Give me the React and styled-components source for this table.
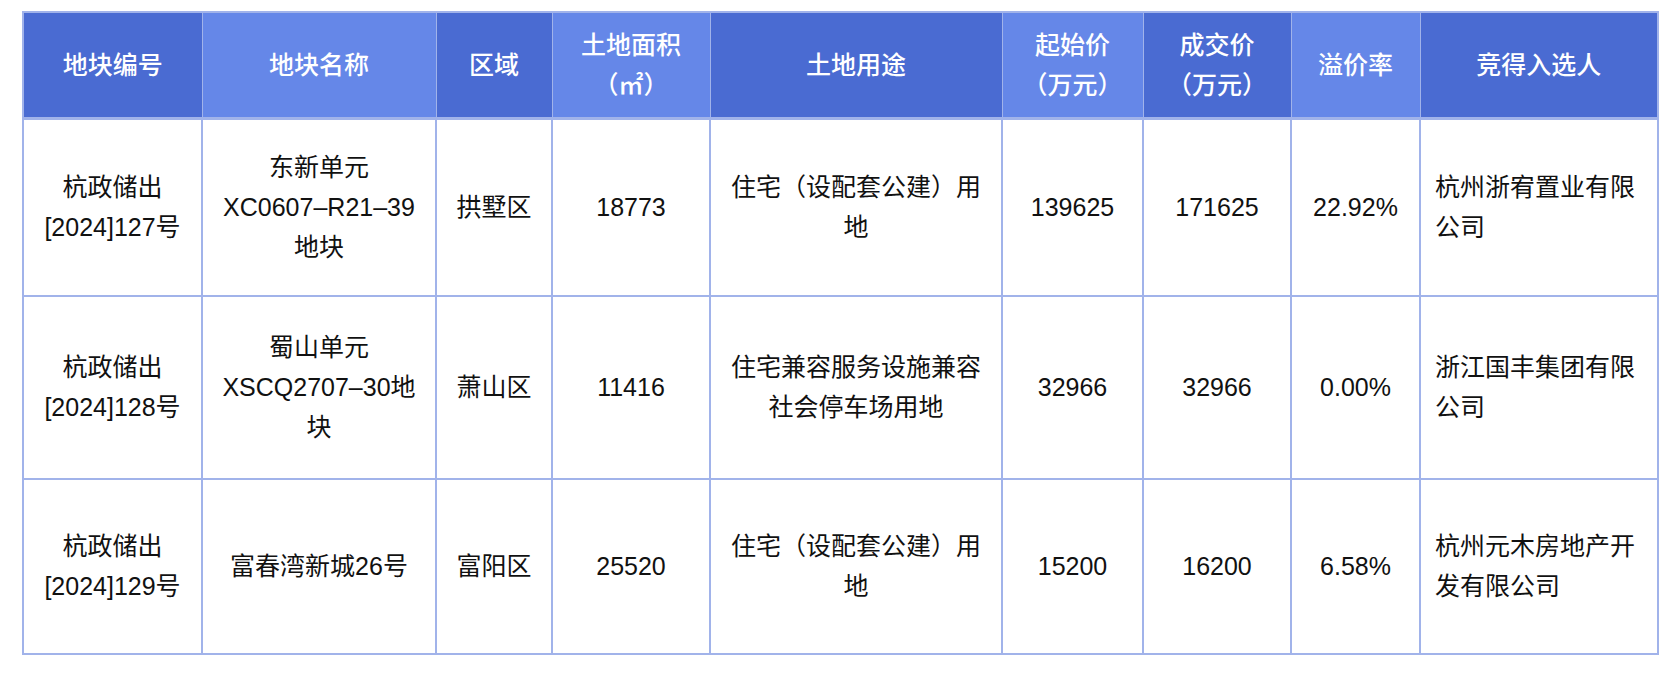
import React from 'react'
import styled, { createGlobalStyle } from 'styled-components'

const GlobalStyle = createGlobalStyle`
  body {
    margin: 0;
    background: #ffffff;
    font-family: "Liberation Sans", "Noto Sans CJK SC", sans-serif;
  }
`

const Page = styled.div`
  padding: 11px 20px 0 22px;
`

const Table = styled.table`
  border-collapse: collapse;
  table-layout: fixed;
  width: 1637px;
  border: 2px solid #a1b3ea;
`

const HeadCell = styled.th`
  height: 104px;
  padding: 0 8px;
  background: ${(p) => (p.$light ? '#6587e8' : '#4a6bd2')};
  color: #ffffff;
  font-size: 25px;
  font-weight: 500;
  line-height: 40px;
  text-align: center;
  border: 1px solid #a1b3ea;
  border-bottom: 3px solid #a1b3ea;
`

const Row = styled.tr`
  height: ${(p) => p.$height}px;
`

const Cell = styled.td`
  padding: 0 14px;
  font-size: 25px;
  line-height: 40px;
  color: #111111;
  text-align: ${(p) => (p.$left ? 'left' : 'center')};
  vertical-align: middle;
  border: 2px solid #a1b3ea;
`

const widths = [179, 234, 116, 158, 292, 141, 148, 129, 238]
const rowHeights = [177, 183, 175]

const headers = [
  ['地块编号'],
  ['地块名称'],
  ['区域'],
  ['土地面积', '（㎡）'],
  ['土地用途'],
  ['起始价', '（万元）'],
  ['成交价', '（万元）'],
  ['溢价率'],
  ['竞得入选人'],
]

const rows = [
  [
    ['杭政储出', '[2024]127号'],
    ['东新单元', 'XC0607–R21–39', '地块'],
    ['拱墅区'],
    ['18773'],
    ['住宅（设配套公建）用', '地'],
    ['139625'],
    ['171625'],
    ['22.92%'],
    ['杭州浙宥置业有限', '公司'],
  ],
  [
    ['杭政储出', '[2024]128号'],
    ['蜀山单元', 'XSCQ2707–30地', '块'],
    ['萧山区'],
    ['11416'],
    ['住宅兼容服务设施兼容', '社会停车场用地'],
    ['32966'],
    ['32966'],
    ['0.00%'],
    ['浙江国丰集团有限', '公司'],
  ],
  [
    ['杭政储出', '[2024]129号'],
    ['富春湾新城26号'],
    ['富阳区'],
    ['25520'],
    ['住宅（设配套公建）用', '地'],
    ['15200'],
    ['16200'],
    ['6.58%'],
    ['杭州元木房地产开', '发有限公司'],
  ],
]

const Lines = ({ lines }) =>
  lines.map((line, i) => (
    <React.Fragment key={i}>
      {i > 0 && <br />}
      {line}
    </React.Fragment>
  ))

export default function App() {
  return (
    <>
      <GlobalStyle />
      <Page>
        <Table>
          <colgroup>
            {widths.map((w, i) => (
              <col key={i} style={{ width: w }} />
            ))}
          </colgroup>
          <thead>
            <tr>
              {headers.map((h, i) => (
                <HeadCell key={i} $light={i % 2 === 1}>
                  <Lines lines={h} />
                </HeadCell>
              ))}
            </tr>
          </thead>
          <tbody>
            {rows.map((r, ri) => (
              <Row key={ri} $height={rowHeights[ri]}>
                {r.map((c, ci) => (
                  <Cell key={ci} $left={ci === 8}>
                    <Lines lines={c} />
                  </Cell>
                ))}
              </Row>
            ))}
          </tbody>
        </Table>
      </Page>
    </>
  )
}
